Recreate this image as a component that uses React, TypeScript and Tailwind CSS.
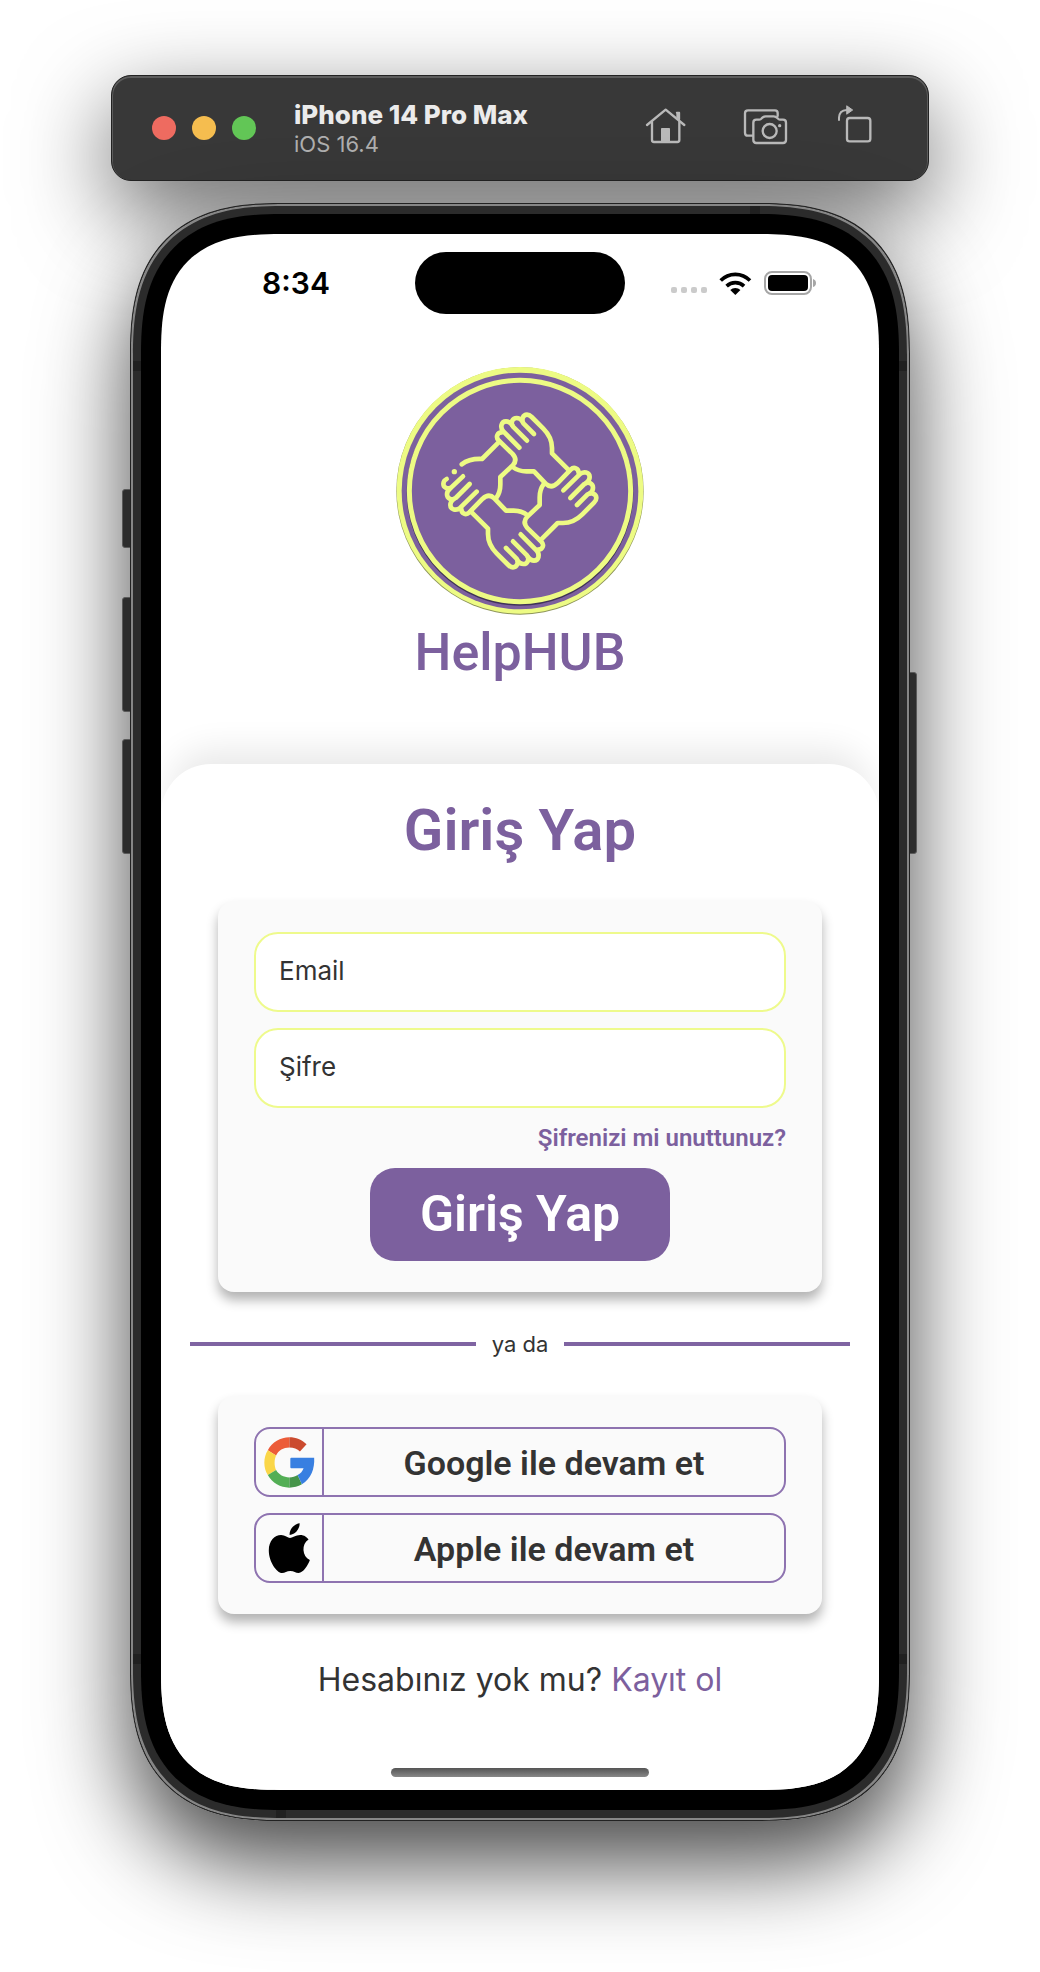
import type { ReactNode } from "react";

function HomeIcon() {
  return (
    <svg viewBox="246 162 144 132" className="h-11 w-12" fill="none" stroke="#b9b9b9" strokeWidth="7" strokeLinecap="round" strokeLinejoin="round">
      <path d="M261 225 L317 179 L373 225" />
      <path d="M276 216 V270 Q276 276 282 276 H352 Q358 276 358 270 V216" />
      <path d="M349 187 H359 V210 L349 202 Z" fill="#b9b9b9" stroke="none" />
      <path d="M350 188 H358 V208" strokeWidth="5" />
      <rect x="303" y="234" width="27" height="42" rx="2" fill="#b9b9b9" stroke="none" />
    </svg>
  );
}

function CameraIcon() {
  return (
    <svg viewBox="546 162 144 132" className="h-11 w-12" fill="none" stroke="#b9b9b9" strokeWidth="7" strokeLinecap="round" strokeLinejoin="round">
      <path d="M577 257 H564 Q555 257 555 248 V190 Q555 181 564 181 H645 Q653 181 653 189 V198" />
      <path d="M589 209 H598 Q602 209 605 205 Q610 199 617 199 H641 Q648 199 653 205 Q656 209 660 209 H669 Q678 209 678 218 V270 Q678 279 669 279 H589 Q580 279 580 270 V218 Q580 209 589 209 Z" />
      <circle cx="629" cy="243" r="21" />
      <circle cx="659" cy="227" r="5" fill="#b9b9b9" stroke="none" />
    </svg>
  );
}

function RotateIcon() {
  return (
    <svg viewBox="822 162 120 132" className="h-11 w-10" fill="none" stroke="#b9b9b9" strokeWidth="7" strokeLinecap="round" strokeLinejoin="round">
      <rect x="861" y="204" width="70" height="70" rx="8" />
      <path d="M837 210 V203 Q838 181 860 180" strokeWidth="6" />
      <path d="M861 168 L878 180 L861 192 Z" fill="#b9b9b9" strokeWidth="3" />
    </svg>
  );
}

const FINGERS = [
  "M111 108 L69 66 C60 54 68 40 80 40 C87 40 92 43 97 49",
  "M88 129 L40 80 C29 68 34 50 48 50 C56 50 61 54 66 60",
];
const THUMB = "M36 83 C22 83 16 97 26 107 L67 147 C79 160 78 172 68 182 L31 217 V240 C31 255 27 269 18 281";
const HAND = "M132 88 L101 57 C92 46 99 30 111 30 C117 30 121 33 125 37 L160 72 C177 89 186 110 186 130 V146 L238 198";

function Logo() {
  return (
    <svg viewBox="48 52 744 744" className="h-62 w-62" role="img" aria-label="HelpHUB" fill="none">
      <circle cx="420" cy="424" r="371" fill="#8d9459" />
      <circle cx="420" cy="422" r="370" fill="#edfb84" />
      <circle cx="420" cy="424" r="355" fill="#7c609e" />
      <circle cx="420" cy="428" r="334" stroke="#3f3358" strokeWidth="12" />
      <circle cx="420" cy="424" r="332" fill="#7c609e" stroke="#edfb84" strokeWidth="15" />
      <g transform="translate(330 165)" stroke="#edfb84" strokeWidth="14" strokeLinecap="round" strokeLinejoin="round">
        {[0, 90, 180, 270].map((angle) => (
          <g key={angle} transform={`rotate(${angle} 90 259)`}>
            {FINGERS.map((d) => (
              <path key={d} d={d} />
            ))}
            <path d={THUMB} />
            {angle !== 270 && <path d={HAND} />}
          </g>
        ))}
      </g>
      <g stroke="#edfb84" strokeWidth="14" strokeLinecap="round" strokeLinejoin="round">
        <path d="M200 388 C188 394 187 409 197 414 C204 418 209 417 214 413 L249 380" />
        <path d="M245 344 C262 331 285 327 306 328 L358 276" />
        <circle cx="223" cy="366" r="8" fill="#edfb84" stroke="none" />
      </g>
    </svg>
  );
}

function WifiIcon() {
  return (
    <svg viewBox="478 658 100 76" className="h-[25px] w-[33px]" fill="none" stroke="#000" strokeWidth="11">
      <path d="M483 687 A62 62 0 0 1 572 687" />
      <path d="M501 704 A38 38 0 0 1 554 704" />
      <path d="M527.500 731 L512 716 A22 22 0 0 1 543 716 Z" fill="#000" stroke="none" />
    </svg>
  );
}

function Battery() {
  return (
    <svg viewBox="0 0 53 24" className="h-6 w-[53px]" fill="none">
      <rect x="1" y="1" width="46" height="22" rx="7" stroke="#a6a6a6" strokeWidth="2" />
      <rect x="4" y="4" width="40" height="16" rx="4" fill="#000" />
      <path d="M49 8 Q52 9 52 12 Q52 15 49 16 Z" fill="#a6a6a6" />
    </svg>
  );
}

function GoogleLogo() {
  return (
    <svg viewBox="490 170 153 154" className="h-[51px] w-[51px]">
      <path d="M566 171 C539 171 514 186 501 210 L526 226 C533 211 548 202 566 202 Z" fill="#ec5c39" />
      <path d="M566 171 V202 C579 202 590 206 598 214 L618 192 C604 179 586 171 566 171 Z" fill="#cb4b2f" />
      <path d="M501 210 C487 232 487 263 501 285 L526 270 C520 256 520 239 526 226 Z" fill="#fad648" />
      <path d="M501 285 C514 309 539 323 566 323 V292 C549 292 534 284 526 270 Z" fill="#53ae55" />
      <path d="M566 323 C580 323 592 320 604 313 L591 285 C584 290 575 292 566 292 Z" fill="#46954a" />
      <path d="M569 236 Q569 233 572 233 H641 C643 265 632 297 604 313 L591 285 C600 280 606 273 609 264 H572 Q569 264 569 261 Z" fill="#387fe1" />
    </svg>
  );
}

function AppleLogo() {
  return (
    <svg viewBox="490 429 153 154" className="h-[51px] w-[51px]" fill="#000">
      <path d="M597 430 C598 446 584 464 567 465 C565 449 580 432 597 430 Z" />
      <path d="M568 474 C575 474 585 465 599 465 C611 465 620 472 624 479 C602 492 604 530 628 541 C623 556 608 580 594 580 C585 580 580 574 569 574 C558 574 553 580 544 580 C528 580 504 546 504 512 C504 482 522 465 541 465 C553 465 562 474 568 474 Z" />
    </svg>
  );
}

function Card({ children }: { children: ReactNode }) {
  return (
    <div className="mx-[57px] flex flex-col rounded-2xl bg-[#fafafa] px-9 py-[31px] shadow-[0_8px_12px_rgba(0,0,0,0.3)]">
      {children}
    </div>
  );
}

function Field({ id, label, type }: { id: string; label: string; type: string }) {
  return (
    <input
      id={id}
      type={type}
      aria-label={label}
      placeholder={label}
      className="h-20 w-full rounded-3xl border-2 border-[#eefa8c] bg-white px-[23px] pb-1 text-[26px] text-[#333] outline-none placeholder:text-[#333] placeholder:opacity-100"
    />
  );
}

function SocialButton({ icon, children }: { icon: ReactNode; children: ReactNode }) {
  return (
    <button type="button" className="flex h-[70px] w-full items-stretch rounded-2xl border-2 border-[#8e73b0] font-[Roboto] text-[34px] font-semibold text-[#333]">
      <span className="flex w-[68px] items-center justify-center border-r-2 border-[#8e73b0]">{icon}</span>
      <span className="flex flex-1 items-center justify-center pt-0.5">{children}</span>
    </button>
  );
}

function SideKey({ className }: { className: string }) {
  return <div className={`absolute w-[10px] border border-[#5a5a5a] bg-[#2d2d2d] ${className}`} />;
}

function Simulator() {
  return (
    <div className="relative mx-auto mt-[22px] w-[780px] max-w-full rounded-[123px] shadow-[0_42px_90px_rgba(0,0,0,0.72)] supports-[corner-shape:squircle]:rounded-[151px] supports-[corner-shape:squircle]:[corner-shape:superellipse(1.35)]">
      <SideKey className="top-[286px] -left-[8px] h-[59px] rounded-l-[3px]" />
      <SideKey className="top-[394px] -left-[8px] h-[115px] rounded-l-[3px]" />
      <SideKey className="top-[536px] -left-[8px] h-[115px] rounded-l-[3px]" />
      <SideKey className="top-[469px] -right-[7px] h-[182px] rounded-r-[3px]" />
      <div className="relative overflow-hidden rounded-[inherit] border border-[#222] bg-[#2b2b2b] p-[10px] shadow-[inset_0_0_0_2px_#868686] supports-[corner-shape:squircle]:[corner-shape:inherit]">
        <div className="absolute top-[2px] right-[149px] h-2 w-[10px] bg-[#202020]" />
        <div className="absolute bottom-[2px] left-[145px] h-2 w-[10px] bg-[#202020]" />
        <div className="absolute top-[157px] left-[2px] h-[10px] w-2 bg-[#202020]" />
        <div className="absolute top-[157px] right-[2px] h-[10px] w-2 bg-[#202020]" />
        <div className="absolute bottom-[156px] left-[2px] h-[10px] w-2 bg-[#202020]" />
        <div className="absolute right-[2px] bottom-[156px] h-[10px] w-2 bg-[#202020]" />
        <div className="rounded-[112px] bg-black p-5 supports-[corner-shape:squircle]:rounded-[140px] supports-[corner-shape:squircle]:[corner-shape:inherit]">
          <div className="overflow-hidden rounded-[92px] bg-white supports-[corner-shape:squircle]:rounded-[120px] supports-[corner-shape:squircle]:[corner-shape:superellipse(1.44)]">
            <Screen />
          </div>
        </div>
      </div>
    </div>
  );
}

function Screen() {
  return (
    <>
      <div className="grid grid-cols-[1fr_210px_1fr] items-center pt-[18px]">
        <div className="pl-4 text-center text-[30px] leading-[62px] font-semibold text-black">8:34</div>
        <div className="h-[62px] rounded-full bg-black" />
        <div className="flex items-center justify-end pr-[62px]">
          <div className="mr-3 flex gap-1 pt-[14px]">
            {[0, 1, 2, 3].map((dot) => (
              <span key={dot} className="size-[6px] rounded-xs bg-[#cbcbcb]" />
            ))}
          </div>
          <WifiIcon />
          <div className="ml-3"><Battery /></div>
        </div>
      </div>

      <header className="flex flex-col items-center pt-[53px] pb-[81px]">
        <Logo />
        <p className="mt-2 h-15 font-[Roboto] text-[52px] leading-[60px] font-medium text-[#7c609e]">HelpHUB</p>
      </header>

      <main className="rounded-t-[50px] bg-white pt-[30px] pb-[13px] shadow-[0_-24px_34px_-10px_rgba(0,0,0,0.09)]">
        <h1 className="pb-[35px] text-center font-[Roboto] text-[58px] leading-[72px] font-semibold text-[#7c609e]">Giriş Yap</h1>
        <form onSubmit={(event) => event.preventDefault()}>
          <Card>
            <div className="flex flex-col gap-4">
              <Field id="email" label="Email" type="email" />
              <Field id="password" label="Şifre" type="password" />
            </div>
            <a href="#forgot" className="my-[12px] self-end font-[Roboto] text-[24px] leading-9 font-semibold text-[#7c609e]">Şifrenizi mi unuttunuz?</a>
            <button type="submit" className="h-[93px] self-center rounded-[25px] bg-[#7c609e] px-[50px] font-[Roboto] text-[50px] font-semibold text-white">Giriş Yap</button>
          </Card>
        </form>

        <div className="mx-[29px] flex h-[104px] items-center gap-4 text-[22px] text-[#333]">
          <span className="h-1 flex-1 bg-[#7f64a2]" />
          ya da
          <span className="h-1 flex-1 bg-[#7f64a2]" />
        </div>

        <Card>
          <div className="flex flex-col gap-4">
            <SocialButton icon={<GoogleLogo />}>Google ile devam et</SocialButton>
            <SocialButton icon={<AppleLogo />}>Apple ile devam et</SocialButton>
          </div>
        </Card>

        <p className="pt-[42px] text-center text-[32px] leading-[48px] text-[#333]">
          Hesabınız yok mu? <a href="#register" className="text-[#7c609e]">Kayıt ol</a>
        </p>
        <div className="mx-auto mt-16 h-[9px] w-[258px] rounded-full bg-linear-to-b from-[#555] to-[#888]" />
      </main>
    </>
  );
}

export default function App() {
  return (
    <div className="overflow-hidden bg-white pt-[75px] pb-[151px] font-[Inter,'Liberation_Sans',sans-serif]">
      <div className="relative mx-auto flex h-[106px] w-[818px] max-w-full items-center rounded-[20px] border border-[#222] bg-[#383838] pr-[54px] pl-10 shadow-[0_30px_90px_rgba(0,0,0,0.6),inset_0_1px_0_1px_#5c5c5c]">
        <div className="flex gap-4">
          <button type="button" aria-label="Close" className="size-6 rounded-full bg-[#ee6b60]" />
          <button type="button" aria-label="Minimize" className="size-6 rounded-full bg-[#f5bd4f]" />
          <button type="button" aria-label="Zoom" className="size-6 rounded-full bg-[#62c656]" />
        </div>
        <div className="ml-[38px] flex-1 pt-0.5">
          <div className="text-[26px] leading-[30px] font-extrabold text-[#ebebeb]">iPhone 14 Pro Max</div>
          <div className="text-[22px] leading-[28px] text-[#afafaf]">iOS 16.4</div>
        </div>
        <button type="button" aria-label="Home" className="mr-[52px] mb-1"><HomeIcon /></button>
        <button type="button" aria-label="Screenshot" className="mr-11 mb-1"><CameraIcon /></button>
        <button type="button" aria-label="Rotate" className="mb-1"><RotateIcon /></button>
      </div>
      <Simulator />
    </div>
  );
}
